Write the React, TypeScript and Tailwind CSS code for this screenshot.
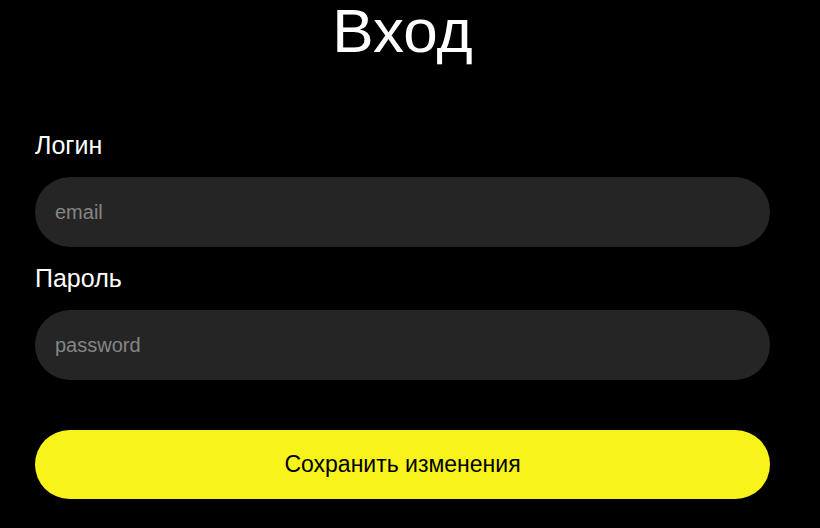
import React from 'react';

const inputClass =
  'h-[70px] w-full rounded-full bg-[#252525] px-5 text-xl text-white outline-none placeholder:text-[#858585]';

function Field({ id, label, type }: { id: string; label: string; type: string }) {
  return (
    <div className="flex flex-col gap-[18px]">
      <label htmlFor={id} className="text-[25px] leading-7">
        {label}
      </label>
      <input id={id} name={id} type={type} placeholder={id} className={inputClass} />
    </div>
  );
}

export default function App() {
  return (
    <main className="min-h-screen bg-black pr-[50px] pl-[35px] pb-7 font-['Liberation_Sans',Arial,sans-serif] text-white">
      <h1 className="text-center text-[62px] leading-[61px]">Вход</h1>
      <form className="flex flex-col pt-[70px]" onSubmit={(e) => e.preventDefault()}>
        <div className="flex flex-col gap-[17px]">
          <Field id="email" label="Логин" type="email" />
          <Field id="password" label="Пароль" type="password" />
        </div>
        <button type="submit" className="mt-[50px] h-[69px] w-full rounded-full bg-[#f8f31b] text-[23px] text-black">
          Сохранить изменения
        </button>
      </form>
    </main>
  );
}
